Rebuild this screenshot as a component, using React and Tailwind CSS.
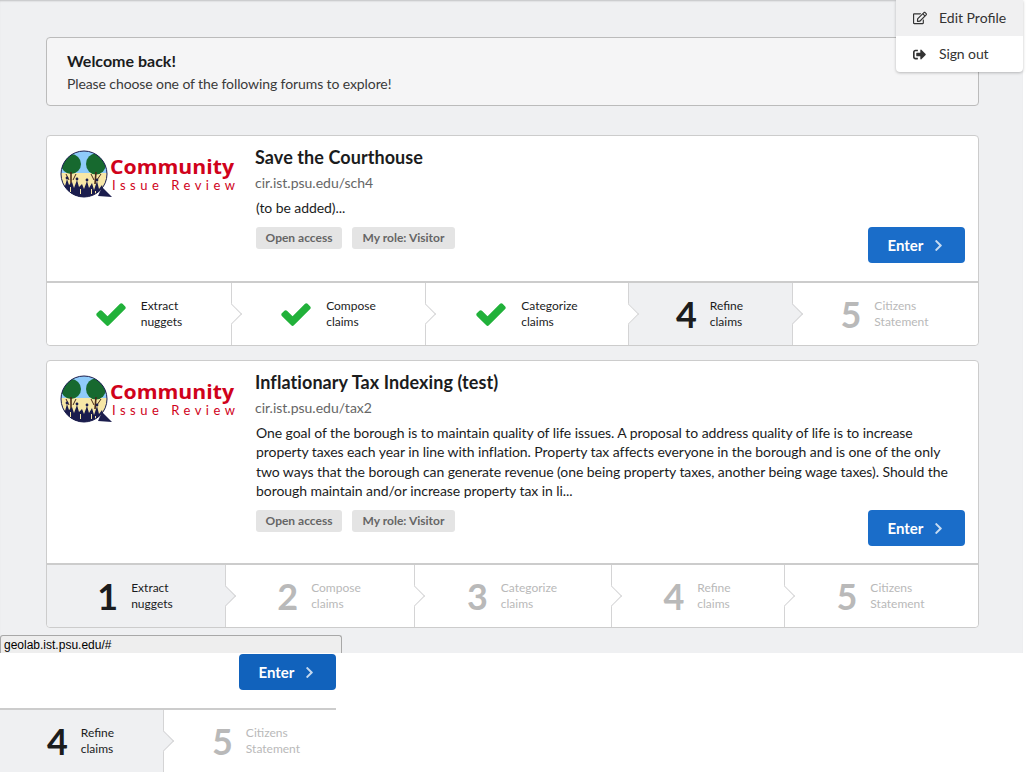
import React from "react";
import { FaChevronRight, FaRegEdit, FaSignOutAlt } from "react-icons/fa";

function Logo({ id }) {
  return (
    <svg width="180" height="52" viewBox="0 0 180 52" className="block">
      <defs>
        <clipPath id={id}>
          <circle cx="24" cy="24" r="23" />
        </clipPath>
      </defs>
      <g clipPath={`url(#${id})`}>
        <rect x="0" y="0" width="48" height="48" fill="#8fcbfa" />
        <rect x="0" y="23" width="48" height="25" fill="#f7e7a6" />
        <ellipse cx="11" cy="14" rx="10" ry="10" fill="#17692f" />
        <ellipse cx="36" cy="14" rx="10" ry="10.5" fill="#17692f" />
        <path d="M11 22 L11 34 M36 22 L35 34" stroke="#4a2a1a" strokeWidth="1.6" />
        <path d="M6 24 L9 30 M16 24 L13 30 M31 24 L34 30 M41 24 L37 30" stroke="#4a2a1a" strokeWidth="1" />
        <g fill="#1b1d4d">
          <path d="M0 48 L2 33 L5 36 L7 29 L9 35 L12 32 L14 38 L17 30 L19 37 L22 34 L24 39 L27 31 L29 38 L32 33 L34 40 L37 31 L39 39 L42 35 L44 42 L46 48 Z" />
          <circle cx="7" cy="28" r="1.4" />
          <circle cx="17" cy="29" r="1.4" />
          <circle cx="27" cy="30" r="1.4" />
          <circle cx="37" cy="30" r="1.4" />
          <rect x="0" y="42" width="26" height="6" />
        </g>
        <g fill="#f7e7a6">
          <rect x="10" y="37" width="1" height="6" />
          <rect x="20" y="39" width="1" height="5" />
          <rect x="31" y="39" width="1" height="5" />
          <rect x="35" y="41" width="1" height="4" />
        </g>
      </g>
      <circle cx="24" cy="24" r="23" fill="none" stroke="#1b1d4d" strokeWidth="1" />
      <path d="M42 37 L52 47 L38 46 Z" fill="#1b1d4d" />
      <text x="50" y="24" textLength="124" lengthAdjust="spacingAndGlyphs" fill="#d0021b" fontFamily="Open Sans" fontWeight="700" fontSize="20">
        Community
      </text>
      <text x="52" y="40" textLength="123" fill="#d0021b" fontFamily="Lato" fontWeight="400" fontSize="13">
        Issue Review
      </text>
    </svg>
  );
}

function EnterButton({ className }) {
  return (
    <a className={"flex h-9 w-[97px] items-center justify-center gap-[9px] rounded-[4px] text-[15px] font-bold text-white " + className}>
      Enter
      <FaChevronRight className="text-[13px] opacity-75" />
    </a>
  );
}

function CheckMark() {
  return (
    <svg viewBox="0 0 1792 1792" className="mr-[13px] size-[34px] shrink-0 fill-[#21b13a]">
      <path d="M1671 566q0 40-28 68l-724 724-136 136q-28 28-68 28t-68-28l-136-136-362-362q-28-28-28-68t28-68l136-136q28-28 68-28t68 28l294 295 656-657q28-28 68-28t68 28l136 136q28 28 28 68z" />
    </svg>
  );
}

function Step({ width, mark, top, bottom, state, arrow = true }) {
  const active = state === "active";
  const muted = state === "todo";
  return (
    <div
      className={
        "relative flex h-full shrink-0 items-center justify-center pr-[2px] " +
        width +
        (active ? " bg-[#eff0f2]" : " bg-white") +
        (arrow ? " border-r border-[#d4d4d5]" : "")
      }
    >
      {state === "done" ? (
        <CheckMark />
      ) : (
        <span className={"mr-[13px] text-[36px] leading-none font-bold " + (muted ? "text-[#b9b9b9]" : "text-[#1b1c1d]")}>{mark}</span>
      )}
      <div className={"text-xs leading-4 " + (muted ? "text-[#b9b9b9]" : "text-[#1b1c1d]")}>
        <div>{top}</div>
        <div>{bottom}</div>
      </div>
      {arrow && (
        <span
          className={
            "absolute top-1/2 right-[-8px] z-10 size-[15px] -translate-y-1/2 rotate-45 border-t border-r border-[#d4d4d5] " +
            (active ? "bg-[#eff0f2]" : "bg-white")
          }
        />
      )}
    </div>
  );
}

function Forum({ logoId, title, url, children, bodyHeight, steps }) {
  return (
    <div className="rounded-[4px] border border-[#cccccc] bg-white">
      <div className={"flex pt-[11px] pr-[13px] pl-[13px] " + bodyHeight}>
        <div className="w-[196px] shrink-0 pt-[3px]">
          <Logo id={logoId} />
        </div>
        <div className="flex-1">
          <h2 className="-ml-px text-lg leading-5 font-bold tracking-[0.08px] text-[#1b1c1d]">{title}</h2>
          <p className="mt-[6px] -ml-px text-sm leading-5 text-[#666666]">{url}</p>
          <div className="mt-[5px] text-sm leading-[19.33px] tracking-[-0.07px] text-[#1b1c1d]">{children}</div>
          <div className="mt-[10px] flex items-start justify-between">
            <div className="flex gap-[10px]">
              <span className="flex h-[22px] w-[86px] items-center justify-center rounded-[3px] bg-[#e4e4e4] text-xs font-bold text-[#666666]">Open access</span>
              <span className="flex h-[22px] w-[103px] items-center justify-center rounded-[3px] bg-[#e4e4e4] text-xs font-bold text-[#666666]">My role: Visitor</span>
            </div>
            <EnterButton className="bg-[#1a6dc9]" />
          </div>
        </div>
      </div>
      <div className="flex h-[64px] overflow-hidden rounded-b-[4px] border-t-2 border-[#cccccc]">{steps}</div>
    </div>
  );
}

export default function App() {
  return (
    <div className="min-h-[778px] bg-white font-['Lato',sans-serif]">
      <div className="relative h-[653px] w-[1023px] bg-[#eff0f2] pt-[37px] pl-[46px] shadow-[inset_0_2px_2px_-1px_rgba(0,0,0,0.2)]">
        <div className="w-[933px]">
          <div className="h-[69px] rounded-[4px] border border-[#bbbbbb] bg-[#f5f5f6] pt-[13px] pl-[20px]">
            <h1 className="text-base leading-5 font-bold text-[#1b1c1d]">Welcome back!</h1>
            <p className="mt-[3px] text-sm leading-5 tracking-[-0.1px] text-[#3a3a3a]">Please choose one of the following forums to explore!</p>
          </div>

          <div className="mt-[29px]">
            <Forum
              logoId="logo-a"
              title="Save the Courthouse"
              url="cir.ist.psu.edu/sch4"
              bodyHeight="h-[145px]"
              steps={
                <>
                  <Step width="w-[185px]" state="done" top="Extract" bottom="nuggets" />
                  <Step width="w-[194px]" state="done" top="Compose" bottom="claims" />
                  <Step width="w-[203px]" state="done" top="Categorize" bottom="claims" />
                  <Step width="w-[164px]" state="active" mark="4" top="Refine" bottom="claims" />
                  <Step width="flex-1" state="todo" mark="5" top="Citizens" bottom="Statement" arrow={false} />
                </>
              }
            >
              (to be added)...
            </Forum>
          </div>

          <div className="mt-[14px]">
            <Forum
              logoId="logo-b"
              title="Inflationary Tax Indexing (test)"
              url="cir.ist.psu.edu/tax2"
              bodyHeight="h-[202px]"
              steps={
                <>
                  <Step width="w-[179px]" state="active" mark="1" top="Extract" bottom="nuggets" />
                  <Step width="w-[189px]" state="todo" mark="2" top="Compose" bottom="claims" />
                  <Step width="w-[197px]" state="todo" mark="3" top="Categorize" bottom="claims" />
                  <Step width="w-[173px]" state="todo" mark="4" top="Refine" bottom="claims" />
                  <Step width="flex-1" state="todo" mark="5" top="Citizens" bottom="Statement" arrow={false} />
                </>
              }
            >
              One goal of the borough is to maintain quality of life issues. A proposal to address quality of life is to increase
              property taxes each year in line with inflation. Property tax affects everyone in the borough and is one of the only
              two ways that the borough can generate revenue (one being property taxes, another being wage taxes). Should the
              borough maintain and/or increase property tax in li...
            </Forum>
          </div>
        </div>

        {/* user menu, open over the page */}
        <div className="absolute top-0 right-0 w-[127px] overflow-hidden rounded-b-[4px] bg-white text-sm text-[#333333] shadow-[0_1px_3px_rgba(0,0,0,0.25)]">
          <div className="flex h-9 items-center bg-[#f0f0f1] pl-[17px]">
            <FaRegEdit className="mr-[12px] size-[14px] shrink-0" />
            <span>Edit Profile</span>
          </div>
          <div className="flex h-9 items-center pl-[17px]">
            <FaSignOutAlt className="mr-[13px] size-[13px] shrink-0" />
            <span className="tracking-[-0.1px]">Sign out</span>
          </div>
        </div>

        {/* browser status bubble */}
        <div className="absolute bottom-0 left-0 flex h-[18px] w-[342px] items-center rounded-t-[3px] border border-b-0 border-[#a8a8a8] bg-[#eeeeee] pl-[3px] font-['Liberation_Sans',sans-serif] text-[12px] text-black">
          geolab.ist.psu.edu/#
        </div>
      </div>

      {/* repaint leftovers under the page */}
      <div className="w-[336px] overflow-hidden">
        <div className="flex justify-end pt-px">
          <EnterButton className="bg-[#1162bc]" />
        </div>
        <div className="mt-[18px] flex h-[64px] border-t-2 border-[#cccccc]">
          <Step width="w-[164px]" state="active" mark="4" top="Refine" bottom="claims" />
          <Step width="w-[186px]" state="todo" mark="5" top="Citizens" bottom="Statement" arrow={false} />
        </div>
      </div>
    </div>
  );
}
